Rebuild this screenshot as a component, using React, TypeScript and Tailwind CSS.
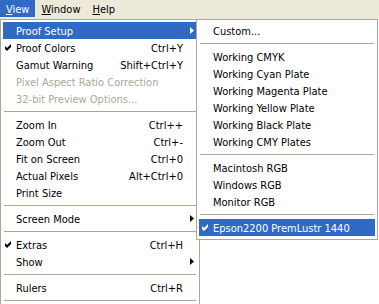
import React from "react";

type Item =
  | { sep: true }
  | {
      sep?: false;
      label: string;
      shortcut?: string;
      checked?: boolean;
      disabled?: boolean;
      sub?: boolean;
      active?: boolean;
    };

const mainItems: Item[] = [
  { label: "Proof Setup", sub: true, active: true },
  { label: "Proof Colors", shortcut: "Ctrl+Y", checked: true },
  { label: "Gamut Warning", shortcut: "Shift+Ctrl+Y" },
  { label: "Pixel Aspect Ratio Correction", disabled: true },
  { label: "32-bit Preview Options...", disabled: true },
  { sep: true },
  { label: "Zoom In", shortcut: "Ctrl++" },
  { label: "Zoom Out", shortcut: "Ctrl+-" },
  { label: "Fit on Screen", shortcut: "Ctrl+0" },
  { label: "Actual Pixels", shortcut: "Alt+Ctrl+0" },
  { label: "Print Size" },
  { sep: true },
  { label: "Screen Mode", sub: true },
  { sep: true },
  { label: "Extras", shortcut: "Ctrl+H", checked: true },
  { label: "Show", sub: true },
  { sep: true },
  { label: "Rulers", shortcut: "Ctrl+R" },
  { sep: true },
];

const subItems: Item[] = [
  { label: "Custom..." },
  { sep: true },
  { label: "Working CMYK" },
  { label: "Working Cyan Plate" },
  { label: "Working Magenta Plate" },
  { label: "Working Yellow Plate" },
  { label: "Working Black Plate" },
  { label: "Working CMY Plates" },
  { sep: true },
  { label: "Macintosh RGB" },
  { label: "Windows RGB" },
  { label: "Monitor RGB" },
  { sep: true },
  { label: "Epson2200 PremLustr 1440", checked: true, active: true },
];

function Check({ white }: { white?: boolean }) {
  return (
    <svg width="7" height="7" viewBox="0 0 7 7" className="block">
      <path
        d="M0 2 L2 4 L6 0 L6 3 L2 7 L0 5 Z"
        fill={white ? "#ffffff" : "#000000"}
      />
    </svg>
  );
}

function Arrow({ white }: { white?: boolean }) {
  return (
    <svg width="4" height="7" viewBox="0 0 4 7" className="block">
      <path d="M0 0 L4 3.5 L0 7 Z" fill={white ? "#ffffff" : "#000000"} />
    </svg>
  );
}

function Sep() {
  return (
    <div className="flex h-[9px] items-center px-px">
      <div className="h-px w-full bg-[#aca899]" />
    </div>
  );
}

function MainRow({ item }: { item: Exclude<Item, { sep: true }> }) {
  const color = item.active
    ? "bg-[#316ac5] text-white"
    : item.disabled
    ? "text-[#aca899]"
    : "text-black";
  return (
    <div className={`flex h-[17px] items-center ${color}`}>
      <div className="flex w-[13px] shrink-0 items-center pl-[2px]">
        {item.checked && <Check white={item.active} />}
      </div>
      <div className="flex-1 whitespace-nowrap pt-px">{item.label}</div>
      <div className="whitespace-nowrap pt-px">{item.shortcut}</div>
      <div className="flex w-[14px] shrink-0 items-center pl-[7px]">
        {item.sub && <Arrow white={item.active} />}
      </div>
    </div>
  );
}

function SubRow({ item }: { item: Exclude<Item, { sep: true }> }) {
  const color = item.active ? "bg-[#316ac5] text-white" : "text-black";
  return (
    <div className={`flex h-[17px] items-center ${color}`}>
      <div className="flex w-[14px] shrink-0 items-center pl-[3px]">
        {item.checked && <Check white={item.active} />}
      </div>
      <div className="flex-1 whitespace-nowrap pt-px">{item.label}</div>
    </div>
  );
}

export default function App() {
  return (
    <div
      className="relative h-[304px] w-[379px] overflow-hidden bg-white text-[11px] leading-[13px]"
      style={{ fontFamily: "'DejaVu Sans Condensed', 'Liberation Sans', sans-serif" }}
    >
      <div className="flex h-[19px] bg-[#ece9d8] text-black">
        <div className="flex h-[17px] items-center bg-[#316ac5] px-[6px] pt-px text-white">
          <span>
            <span className="underline">V</span>iew
          </span>
        </div>
        <div className="flex h-[17px] items-center px-[6px] pt-px">
          <span>
            <span className="underline">W</span>indow
          </span>
        </div>
        <div className="flex h-[17px] items-center px-[6px] pt-px">
          <span>
            <span className="underline">H</span>elp
          </span>
        </div>
      </div>

      <div className="w-[200px] border border-[#aca899] bg-white p-[2px]">
        {mainItems.map((it, i) =>
          it.sep ? <Sep key={i} /> : <MainRow key={i} item={it} />
        )}
      </div>

      <div className="absolute left-[196px] top-[19px] w-[182px] border border-[#aca899] bg-white px-[2px] pt-[2px] pb-[3px]">
        {subItems.map((it, i) =>
          it.sep ? <Sep key={i} /> : <SubRow key={i} item={it} />
        )}
      </div>
    </div>
  );
}
